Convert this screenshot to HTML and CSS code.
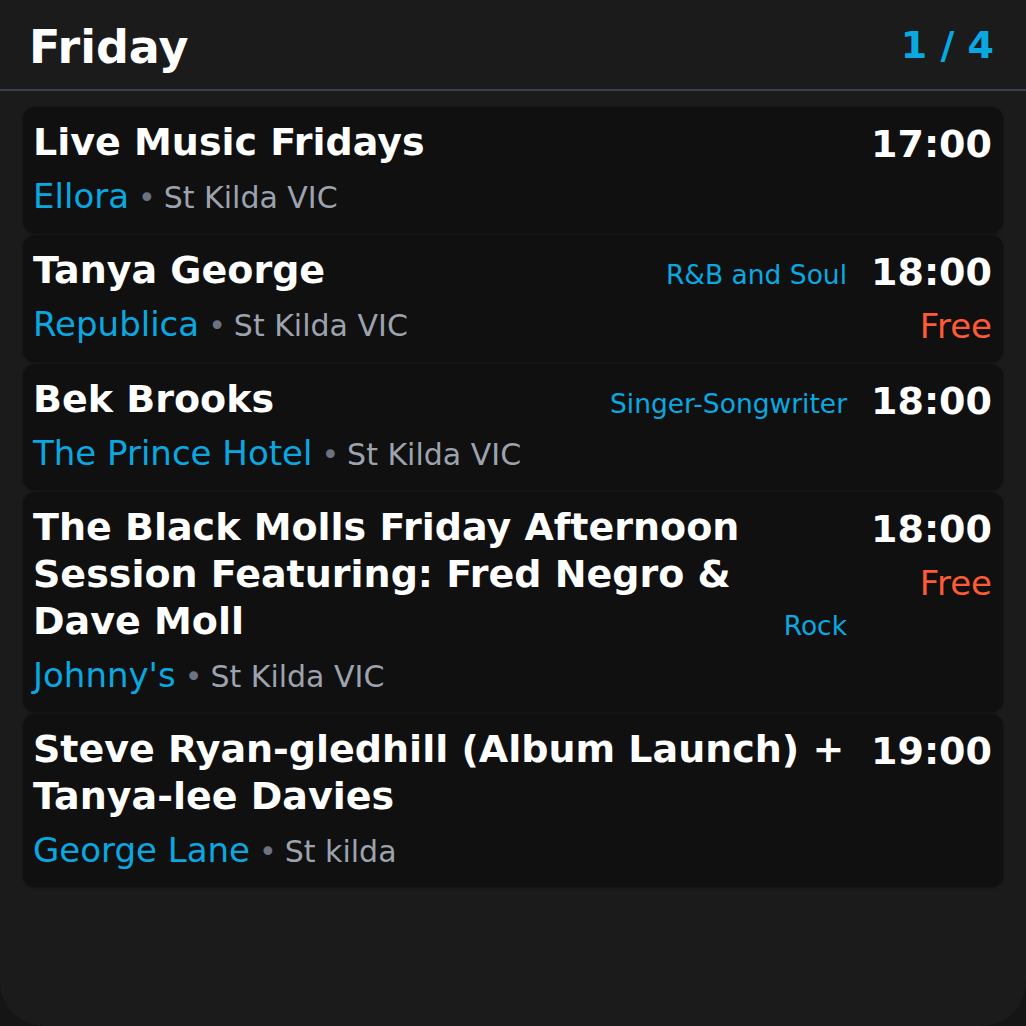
FILE: index.html
```html
<!DOCTYPE html>
<html lang="en">
<head>
<meta charset="utf-8">
<title>Friday</title>
<link rel="stylesheet" href="styles.css">
</head>
<body>
<div class="app">
  <header class="header">
    <h1 class="day">Friday</h1>
    <div class="pager">1 / 4</div>
  </header>
  <main class="list">
    <article class="card">
      <div class="main">
        <div class="top">
          <h2 class="title">Live Music Fridays</h2>
        </div>
        <div class="place"><span class="venue">Ellora</span><span class="sep">•</span><span class="locality">St Kilda VIC</span></div>
      </div>
      <div class="side">
        <div class="time">17:00</div>
      </div>
    </article>
    <article class="card">
      <div class="main">
        <div class="top">
          <h2 class="title">Tanya George</h2>
          <span class="genre">R&amp;B and Soul</span>
        </div>
        <div class="place"><span class="venue">Republica</span><span class="sep">•</span><span class="locality">St Kilda VIC</span></div>
      </div>
      <div class="side">
        <div class="time">18:00</div>
        <div class="price">Free</div>
      </div>
    </article>
    <article class="card">
      <div class="main">
        <div class="top">
          <h2 class="title">Bek Brooks</h2>
          <span class="genre">Singer-Songwriter</span>
        </div>
        <div class="place"><span class="venue">The Prince Hotel</span><span class="sep">•</span><span class="locality">St Kilda VIC</span></div>
      </div>
      <div class="side">
        <div class="time">18:00</div>
      </div>
    </article>
    <article class="card">
      <div class="main">
        <div class="top">
          <h2 class="title">The Black Molls Friday Afternoon Session Featuring: Fred Negro &amp; Dave Moll</h2>
          <span class="genre">Rock</span>
        </div>
        <div class="place"><span class="venue">Johnny's</span><span class="sep">•</span><span class="locality">St Kilda VIC</span></div>
      </div>
      <div class="side">
        <div class="time">18:00</div>
        <div class="price">Free</div>
      </div>
    </article>
    <article class="card">
      <div class="main">
        <div class="top">
          <h2 class="title">Steve Ryan-gledhill (Album Launch) + Tanya-lee Davies</h2>
        </div>
        <div class="place"><span class="venue">George Lane</span><span class="sep">•</span><span class="locality">St kilda</span></div>
      </div>
      <div class="side">
        <div class="time">19:00</div>
      </div>
    </article>
  </main>
</div>
</body>
</html>
```

FILE: styles.css
```css
* {
  box-sizing: border-box;
}

html, body {
  margin: 0;
  padding: 0;
}

body {
  background: #151515;
  font-family: "DejaVu Sans", "Liberation Sans", sans-serif;
  color: #ffffff;
}

.app {
  width: 1026px;
  height: 1026px;
  background: #1b1b1b;
  border-radius: 0 0 44px 44px;
  overflow: hidden;
}

.header {
  display: flex;
  align-items: center;
  justify-content: space-between;
  height: 91px;
  padding: 20px 32px 15.5px 29px;
  border-bottom: 2px solid #3a404c;
}

.day {
  margin: 0;
  font-size: 46px;
  font-weight: bold;
  line-height: normal;
  color: #ffffff;
}

.pager {
  margin-bottom: 4px;
  font-size: 38px;
  font-weight: bold;
  line-height: normal;
  color: #0aa8e0;
}

.list {
  display: flex;
  flex-direction: column;
  gap: 2px;
  padding: 16px 23px;
}

.card {
  display: flex;
  align-items: flex-start;
  gap: 24px;
  padding: 11.5px 11px 10.5px 10px;
  background: #101010;
  border-radius: 12px;
  box-shadow: 0 1px 3px rgba(0, 0, 0, 0.35);
}

.main {
  flex: 1;
  min-width: 0;
  display: flex;
  flex-direction: column;
  gap: 5px;
}

.top {
  display: flex;
  align-items: flex-end;
  gap: 16px;
}

.title {
  flex: 1;
  margin: 0;
  font-size: 38px;
  font-weight: bold;
  line-height: 47px;
  color: #ffffff;
}

.genre {
  flex: none;
  font-size: 26.5px;
  line-height: 39px;
  color: #0aa8e0;
  white-space: nowrap;
}

.place {
  font-size: 34px;
  line-height: 51px;
  white-space: nowrap;
}

.venue {
  color: #0aa8e0;
}

.sep {
  margin: 0 8px 0 9px;
  font-size: 30px;
  color: #6b7280;
}

.locality {
  font-size: 30px;
  color: #9ca3af;
}

.side {
  flex: none;
  display: flex;
  flex-direction: column;
  align-items: flex-end;
}

.time {
  padding-top: 2px;
  font-size: 38px;
  font-weight: bold;
  line-height: 47px;
  color: #ffffff;
}

.price {
  margin-top: 5px;
  font-size: 34px;
  line-height: 51px;
  color: #ff5a36;
}
```
